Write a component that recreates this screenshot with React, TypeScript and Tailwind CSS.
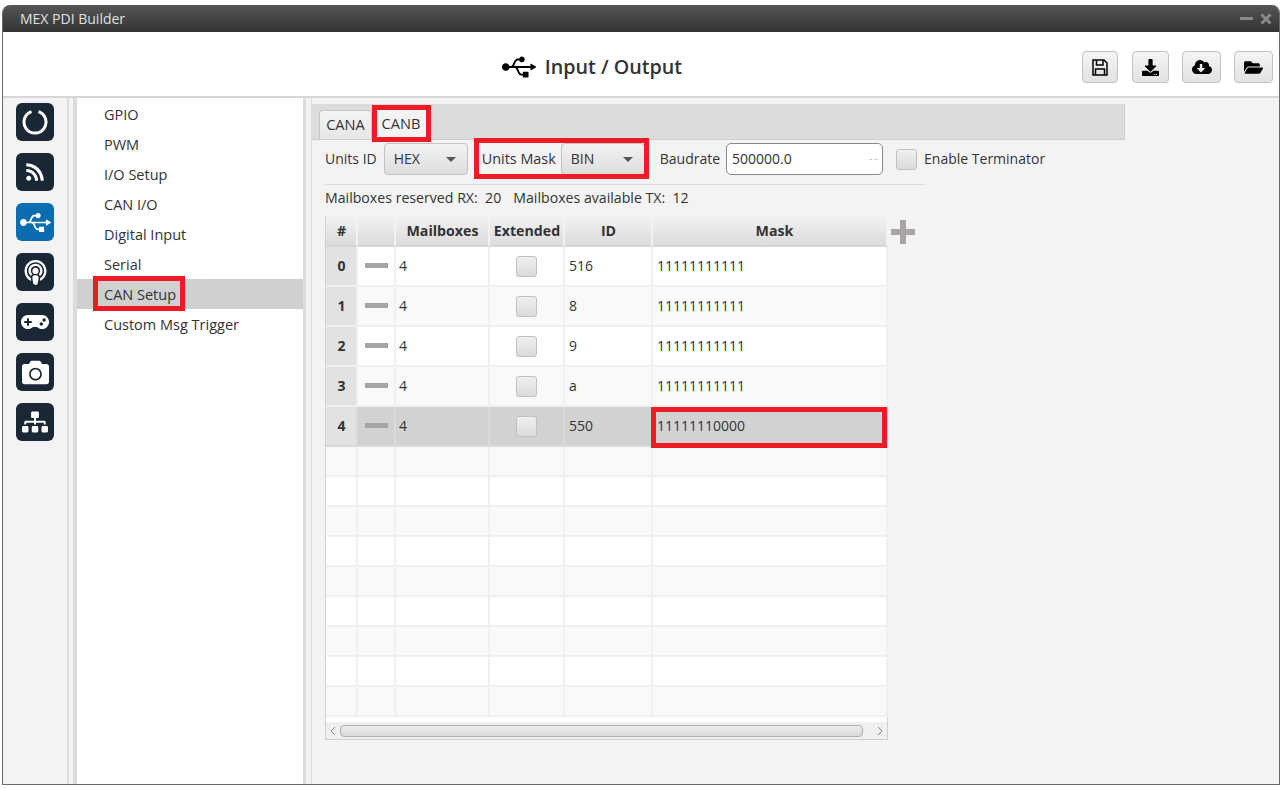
import type { ReactNode } from 'react'
import { FaRss, FaUsb, FaPodcast, FaGamepad, FaCamera, FaSitemap, FaDownload, FaCloudDownloadAlt, FaFolderOpen } from 'react-icons/fa'

const FONT = "font-['Open_Sans','Noto_Sans',sans-serif]"

const menuItems = ['GPIO', 'PWM', 'I/O Setup', 'CAN I/O', 'Digital Input', 'Serial', 'CAN Setup', 'Custom Msg Trigger']

const rows = [
  { id: '516', mask: '11111111111' },
  { id: '8', mask: '11111111111' },
  { id: '9', mask: '11111111111' },
  { id: 'a', mask: '11111111111' },
  { id: '550', mask: '11111110000' },
]

const GRID = 'grid grid-cols-[32px_38px_94px_75px_88px_235px]'

function RedBox({ className }: { className: string }) {
  return <div className={`absolute border-[5px] border-[#ed1c24] pointer-events-none ${className}`} />
}

function PowerIcon() {
  return (
    <svg width="26" height="26" viewBox="0 0 26 26" fill="none">
      <path d="M9.5 2.6 A11 11 0 1 0 16.5 2.6" stroke="white" strokeWidth="3" />
    </svg>
  )
}

function SaveIcon() {
  return (
    <svg width="16" height="17" viewBox="0 0 16 17" fill="none" stroke="black" strokeWidth="1.5">
      <path d="M1 1 H12 L15 4 V16 H1 Z" />
      <path d="M4.5 1 V6 H11 V1" />
      <path d="M3.5 16 V10 H12.5 V16" />
    </svg>
  )
}

function RailButton({ active, children }: { active?: boolean; children: ReactNode }) {
  return (
    <div className={`w-[38px] h-[38px] rounded-[6px] flex items-center justify-center text-white ${active ? 'bg-[#0b6db0]' : 'bg-[#1a2836]'}`}>
      {children}
    </div>
  )
}

function HeaderButton({ width, children }: { width: string; children: ReactNode }) {
  return (
    <div className={`${width} h-[32px] rounded-[4px] border border-[#c2c2c2] bg-gradient-to-b from-[#f4f4f4] to-[#e2e2e2] flex items-center justify-center text-black`}>
      {children}
    </div>
  )
}

function Combo({ label }: { label: string }) {
  return (
    <div className="w-[84px] h-[32px] rounded-[4px] border border-[#c2c2c2] bg-gradient-to-b from-[#f2f2f2] to-[#dedede] flex items-center justify-between pl-[9px] pr-[11px]">
      <span className="pb-[2px]">{label}</span>
      <span className="w-0 h-0 border-l-[5px] border-r-[5px] border-t-[5px] border-l-transparent border-r-transparent border-t-[#555]" />
    </div>
  )
}

function CheckBox() {
  return <div className="w-[21px] h-[21px] rounded-[3px] border border-[#c0c0c0] bg-gradient-to-b from-[#efefef] to-[#dcdcdc]" />
}

function HeadCell({ className = '', children }: { className?: string; children?: ReactNode }) {
  return (
    <div className={`h-[31px] pt-[1px] flex items-center justify-center font-bold text-[14.2px] text-[#333] border-r-2 border-b-2 border-r-[#f2f2f2] border-b-[#d6d6d6] bg-gradient-to-b from-[#f2f2f2] to-[#dcdcdc] ${className}`}>
      {children}
    </div>
  )
}

function Cell({ selected, className = '', children }: { selected?: boolean; className?: string; children?: ReactNode }) {
  const line = selected ? 'border-r-[#dadada] border-b-[#dadada]' : 'border-r-[#f0f0f0] border-b-[#f0f0f0]'
  return <div className={`flex items-center border-r-2 border-b-2 ${line} ${className}`}>{children}</div>
}

export default function App() {
  return (
    <div className={`w-[1285px] h-[788px] bg-white pt-[5px] pl-[2px] pr-[5px] pb-[3px] overflow-hidden text-[14px] text-[#333] ${FONT}`}>
      <div className="h-full flex flex-col border-l border-r border-b border-[#6a6a6a] rounded-t-[8px] overflow-hidden">
        {/* Title bar */}
        <div className="h-[27px] shrink-0 bg-gradient-to-b from-[#565656] to-[#333333] flex items-center justify-between pl-[17px] pr-[7px]">
          <span className="text-[#e0e0e0]">MEX PDI Builder</span>
          <div className="flex items-center gap-[7px]">
            <div className="w-[13px] h-[3px] bg-[#8a8a8a]" />
            <svg width="12" height="12" viewBox="0 0 12 12" stroke="#8a8a8a" strokeWidth="3">
              <path d="M1.5 1.5 L10.5 10.5 M10.5 1.5 L1.5 10.5" />
            </svg>
          </div>
        </div>

        {/* Header */}
        <div className="h-[66px] shrink-0 bg-white border-b-2 border-[#d6d6d6] relative flex items-center justify-center pr-[98px] pt-[6px]">
          <div className="flex items-center gap-[9px]">
            <FaUsb size={34} className="text-black" />
            <span className="text-[19.7px] font-semibold text-[#333]">Input / Output</span>
          </div>
          <div className="absolute right-[6px] top-[19px] flex">
            <HeaderButton width="w-[36px] mr-[14px]"><SaveIcon /></HeaderButton>
            <HeaderButton width="w-[37px] mr-[13px]"><FaDownload size={17} /></HeaderButton>
            <HeaderButton width="w-[39px] mr-[13px]"><FaCloudDownloadAlt size={20} /></HeaderButton>
            <HeaderButton width="w-[39px]"><FaFolderOpen size={19} /></HeaderButton>
          </div>
        </div>

        {/* Body */}
        <div className="flex-1 flex min-h-0 bg-[#f3f3f3]">
          <div className="w-[64px] shrink-0 flex flex-col items-center gap-[12px] pt-[5px]">
            <RailButton><PowerIcon /></RailButton>
            <RailButton><FaRss size={20} /></RailButton>
            <RailButton active><FaUsb size={31} /></RailButton>
            <RailButton><FaPodcast size={25} /></RailButton>
            <RailButton><FaGamepad size={28} /></RailButton>
            <RailButton><FaCamera size={27} /></RailButton>
            <RailButton><FaSitemap size={26} /></RailButton>
          </div>
          <div className="w-[10px] shrink-0 flex justify-between">
            <div className="w-[2px] bg-[#dcdcdc]" />
            <div className="w-[4px] bg-[#dcdcdc]" />
          </div>

          {/* Menu */}
          <div className="w-[226px] shrink-0 bg-white pt-[1px] text-[14.5px]">
            {menuItems.map((item) => (
              <div key={item} className={`h-[30px] pt-[2px] flex items-center pl-[27px] relative ${item === 'CAN Setup' ? 'bg-[#d0d0d0]' : ''}`}>
                {item}
                {item === 'CAN Setup' && <RedBox className="left-[16px] top-[-3px] w-[92px] h-[35px]" />}
              </div>
            ))}
          </div>
          <div className="w-[9px] shrink-0 flex justify-between">
            <div className="w-[3px] bg-[#dcdcdc]" />
            <div className="w-[1px] bg-[#dcdcdc]" />
          </div>

          {/* Content */}
          <div className="flex-1 min-w-0 pt-[6px]">
            <div className="w-[813px] h-[36px] bg-[#dcdcdc] border-b border-r border-[#d0d0d0] flex items-end pl-[7px] text-[14.6px]">
              <div className="w-[53px] h-[29px] rounded-t-[4px] border border-b-0 border-[#c6c6c6] bg-gradient-to-b from-[#f4f4f4] to-[#e6e6e6] flex items-center justify-center">CANA</div>
              <div className="w-[58px] h-[30px] bg-[#f3f3f3] flex items-center justify-center relative">
                CANB
                <RedBox className="left-0 top-[-4px] w-[59px] h-[37px]" />
              </div>
            </div>

            {/* Toolbar */}
            <div className="h-[32px] mt-[3px] flex items-center pl-[13px]">
              <span className="pb-[1px]">Units ID</span>
              <div className="ml-[7px]"><Combo label="HEX" /></div>
              <div className="relative flex items-center ml-[14px]">
                <span className="pb-[1px] text-[14.4px]">Units Mask</span>
                <div className="ml-[5px]"><Combo label="BIN" /></div>
                <RedBox className="left-[-8px] top-[-5px] w-[175px] h-[41px]" />
              </div>
              <span className="ml-[15px] pb-[1px]">Baudrate</span>
              <div className="ml-[6px] w-[157px] h-[32px] rounded-[5px] border border-[#8a8a8a] bg-white flex items-center justify-between pl-[5px] pr-[3px]">
                <span className="pb-[1px]">500000.0</span>
                <span className="text-[#c8c8c8] text-[13px] tracking-[1px]">--</span>
              </div>
              <div className="ml-[13px]"><CheckBox /></div>
              <span className="ml-[7px] pb-[1px]">Enable Terminator</span>
            </div>

            <div className="ml-[13px] mt-[9px] w-[600px] h-[1px] bg-[#dcdcdc]" />
            <div className="ml-[13px] mt-[3px] h-[20px] flex items-center gap-[12px] text-[14.15px]">
              <span>Mailboxes reserved RX:&nbsp; 20</span>
              <span>Mailboxes available TX:&nbsp; 12</span>
            </div>

            {/* Table */}
            <div className="ml-[13px] mt-[8px] flex items-start">
              <div className="w-[563px] border-r border-b border-l border-[#d0d0d0]">
                <div className={GRID}>
                  <HeadCell className="pl-[1px]">#</HeadCell>
                  <HeadCell />
                  <HeadCell className="pl-[1px]">Mailboxes</HeadCell>
                  <HeadCell className="pl-[1px]">Extended</HeadCell>
                  <HeadCell className="pl-[1px]">ID</HeadCell>
                  <HeadCell className="pl-[10px]">Mask</HeadCell>
                </div>
                {rows.map((row, i) => {
                  const selected = i === 4
                  const bg = selected ? 'bg-[#d2d2d2]' : i % 2 === 0 ? 'bg-white' : 'bg-[#f9f9f9]'
                  return (
                    <div key={i} className={`${GRID} h-[40px] ${bg}`}>
                      <Cell selected={selected} className="justify-center font-bold bg-[#e2e2e2] pb-[1px] pl-[1px]">{i}</Cell>
                      <Cell selected={selected} className="justify-center"><div className="w-[23px] h-[5px] ml-[1px] mb-[1px] bg-[#a8a3a5]" /></Cell>
                      <Cell selected={selected} className="pl-[3px] pb-[1px]">4</Cell>
                      <Cell selected={selected} className="justify-center"><CheckBox /></Cell>
                      <Cell selected={selected} className="pl-[4px] pb-[1px]">{row.id}</Cell>
                      <Cell selected={selected} className="pl-[4px] pb-[1px] relative">
                        {row.mask}
                        {selected && <RedBox className="left-[-2px] top-0 w-[236px] h-[41px]" />}
                      </Cell>
                    </div>
                  )
                })}
                {Array.from({ length: 9 }).map((_, i) => (
                  <div key={i} className={`${GRID} h-[30px] ${i % 2 === 0 ? 'bg-[#f9f9f9]' : 'bg-white'}`}>
                    {Array.from({ length: 6 }).map((_, c) => <Cell key={c} />)}
                  </div>
                ))}
                {/* Horizontal scrollbar */}
                <div className="h-[22px] bg-white flex items-end">
                  <div className="w-full h-[17px] bg-[#efefef] flex items-center px-[3px]">
                    <svg width="8" height="10" viewBox="0 0 8 10" fill="none" stroke="#8a8a8a"><path d="M6 1 L2 5 L6 9" /></svg>
                    <div className="w-[523px] ml-[3px] mr-auto h-[12px] rounded-[4px] border border-[#b0b0b0] bg-gradient-to-b from-[#ececec] to-[#dadada]" />
                    <svg width="8" height="10" viewBox="0 0 8 10" fill="none" stroke="#8a8a8a"><path d="M2 1 L6 5 L2 9" /></svg>
                  </div>
                </div>
              </div>
              <svg width="24" height="24" viewBox="0 0 24 24" className="ml-[3px] mt-[4px]" fill="#a9a5a6">
                <rect x="9" y="0" width="6" height="24" />
                <rect x="0" y="9" width="24" height="6" />
              </svg>
            </div>
          </div>
        </div>
      </div>
    </div>
  )
}
